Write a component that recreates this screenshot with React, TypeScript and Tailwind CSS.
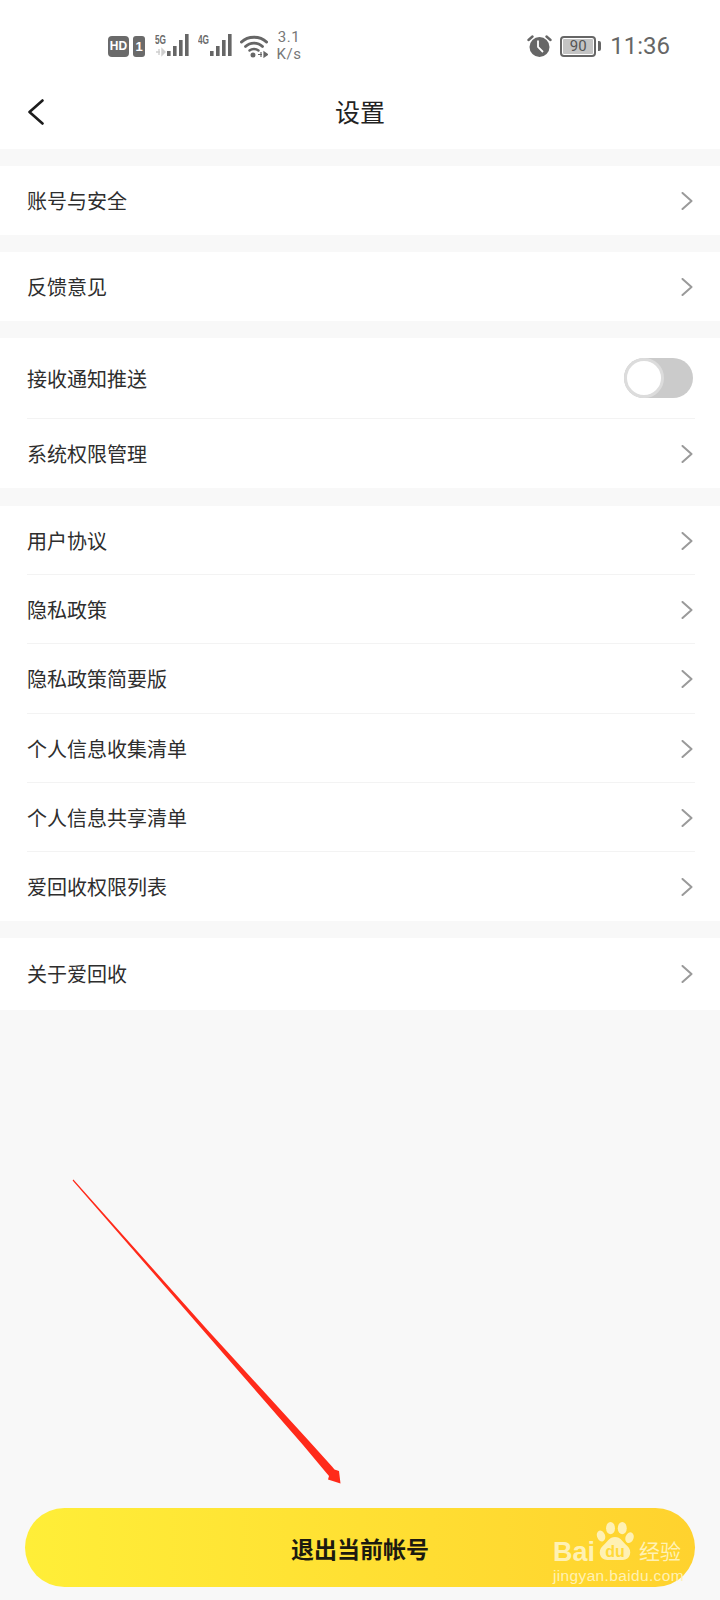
import React from "react";

const Chevron = () => (
  <svg width="12" height="18" viewBox="0 0 12 18" fill="none" className="shrink-0">
    <path d="M1.5 1 L10.5 9 L1.5 17" stroke="#9a9a9a" strokeWidth="2" strokeLinecap="round" strokeLinejoin="round" />
  </svg>
);

const Row = ({ label, className, divider }: { label: string; className: string; divider?: boolean }) => (
  <div className={`relative flex items-center justify-between bg-white pl-[27px] pr-[27px] ${className}`}>
    <span className="text-[20px] leading-[28px] text-[#2e2e2e]">{label}</span>
    <Chevron />
    {divider && <div className="absolute bottom-0 left-[27px] right-[25px] h-px bg-[#f3f3f3]" />}
  </div>
);

const Bars = ({ light }: { light?: boolean }) => (
  <svg width="37" height="24" viewBox="0 0 37 24" className="shrink-0">
    <text x="0" y="10" fontSize="12" fontWeight="700" fill="#6a6a6a" textLength="11" lengthAdjust="spacingAndGlyphs" fontFamily="'Liberation Sans', sans-serif">{light ? "5G" : "4G"}</text>
    {light && <path d="M1 18 H5 M4 15 V21 M7 15 V21 L10 18 Z" stroke="#cfcfcf" strokeWidth="1.4" fill="#cfcfcf" />}
    <rect x="12" y="17" width="3.6" height="5" fill="#666" />
    <rect x="18" y="12" width="3.6" height="10" fill="#666" />
    <rect x="24" y="6" width="3.6" height="16" fill="#666" />
    <rect x="30" y="0" width="3.6" height="22" fill="#666" />
  </svg>
);

const Wifi = () => (
  <svg width="28" height="24" viewBox="0 0 28 24" fill="none" className="shrink-0">
    <path d="M1.5 8 C8 1.5 20 1.5 26.5 8" stroke="#666" strokeWidth="3" strokeLinecap="round" />
    <path d="M5.5 12.5 C10 8 18 8 22.5 12.5" stroke="#666" strokeWidth="2.8" strokeLinecap="round" />
    <path d="M9.5 16.5 C12 14.5 16 14.5 18.5 16.5" stroke="#666" strokeWidth="2.4" strokeLinecap="round" />
    <circle cx="13" cy="21" r="2.5" fill="#666" />
    <path d="M18 20.5 H22 M21 18 V23 M24 18 V23 L27.5 20.5 Z" stroke="#666" strokeWidth="1.2" fill="#666" />
  </svg>
);

const Alarm = () => (
  <svg width="25" height="24" viewBox="0 0 25 24" fill="none" className="shrink-0">
    <circle cx="12.5" cy="13" r="10" fill="#666" />
    <path d="M1.5 6 L5.5 2.5 M23.5 6 L19.5 2.5" stroke="#666" strokeWidth="2.4" strokeLinecap="round" />
    <path d="M11 6.5 V13 L16 18" stroke="#fff" strokeWidth="1.8" />
  </svg>
);

const Paw = () => (
  <svg width="38" height="38" viewBox="0 0 34 34" className="absolute left-[43px] top-0">
    <g fill="#fff1b4">
      <ellipse cx="4.5" cy="12.5" rx="3.6" ry="5" transform="rotate(-20 4.5 12.5)" />
      <ellipse cx="13" cy="5.5" rx="4" ry="5.5" />
      <ellipse cx="23.5" cy="5.5" rx="4" ry="5.5" />
      <ellipse cx="30" cy="14" rx="3.6" ry="5" transform="rotate(20 30 14)" />
      <path d="M17 13.5 C22 13.5 24 18 28 21.5 C33 26 30.5 34 24 34 L10 34 C3.5 34 1 26 6 21.5 C10 18 12 13.5 17 13.5 Z" />
    </g>
  </svg>
);

export default function App() {
  return (
    <div
      className="relative flex h-[1600px] w-[720px] flex-col overflow-hidden bg-[#f8f8f8]"
      style={{ fontFamily: "'Noto Sans CJK SC', 'Noto Sans', sans-serif" }}
    >
      <header className="bg-white">
        <div className="flex h-[92px] items-center pl-[108px] pr-[50px] text-[#666]">
          <div className="flex h-[21px] w-[21px] items-center justify-center rounded-[4px] bg-[#6a6a6a] text-[12px] font-bold leading-none text-white" style={{ fontFamily: "'Liberation Sans', sans-serif" }}>
            HD
          </div>
          <div className="ml-[4px] flex h-[21px] w-[12px] items-center justify-center rounded-[3px] bg-[#6a6a6a] text-[13px] font-bold leading-none text-white" style={{ fontFamily: "'Liberation Sans', sans-serif" }}>
            1
          </div>
          <div className="ml-[10px]"><Bars light /></div>
          <div className="ml-[6px]"><Bars /></div>
          <div className="ml-[5px]"><Wifi /></div>
          <div className="ml-[6px] w-[30px] text-[15px] leading-[17px] tracking-[0.5px] text-[#777]" style={{ fontFamily: "'Roboto', sans-serif" }}>
            <div className="text-center">3.1</div>
            <div className="text-center">K/s</div>
          </div>
          <div className="ml-auto"><Alarm /></div>
          <div className="ml-[8px] flex h-[21px] w-[36px] items-center justify-center rounded-[4px] border-2 border-[#666] p-[1px]">
            <div className="flex h-full w-full items-center justify-center rounded-[1px] bg-[#c4c4c4] text-[15px] leading-none text-[#555]" style={{ fontFamily: "'Roboto', sans-serif" }}>
              90
            </div>
          </div>
          <div className="ml-[2px] h-[10px] w-[3px] rounded-r-[2px] bg-[#666]" />
          <span className="ml-[9px] text-[24px] leading-none text-[#666]" style={{ fontFamily: "'Roboto', sans-serif" }}>11:36</span>
        </div>
        <div className="relative mb-[14px] flex h-[43px] items-center justify-center">
          <svg width="18" height="26" viewBox="0 0 18 26" fill="none" className="absolute left-[27px] top-[7px]">
            <path d="M15.5 1.5 L2.5 13 L15.5 24.5" stroke="#1c1c1c" strokeWidth="2.6" strokeLinecap="round" strokeLinejoin="round" />
          </svg>
          <h1 className="-mt-[5px] text-[25px] font-normal leading-[34px] text-[#222]">设置</h1>
        </div>
      </header>

      <div className="mt-[17px]"><Row label="账号与安全" className="h-[69px]" /></div>
      <div className="mt-[17px]"><Row label="反馈意见" className="h-[69px]" /></div>

      <div className="mt-[17px]">
        <div className="relative flex h-[81px] items-center justify-between bg-white pl-[27px] pr-[27px]">
          <span className="text-[20px] leading-[28px] text-[#2e2e2e]">接收通知推送</span>
          <div className="-mt-[2px] flex h-[40px] w-[69px] items-center rounded-full bg-[#cbcbcb]">
            <div className="h-[40px] w-[40px] rounded-full border-[3px] border-[#dcdcdc] bg-white" />
          </div>
          <div className="absolute bottom-0 left-[27px] right-[25px] h-px bg-[#f3f3f3]" />
        </div>
        <Row label="系统权限管理" className="h-[69px]" />
      </div>

      <div className="mt-[18px]">
        <Row label="用户协议" className="h-[69px]" divider />
        <Row label="隐私政策" className="h-[69px]" divider />
        <Row label="隐私政策简要版" className="h-[70px]" divider />
        <Row label="个人信息收集清单" className="h-[69px]" divider />
        <Row label="个人信息共享清单" className="h-[69px]" divider />
        <Row label="爱回收权限列表" className="h-[69px]" />
      </div>

      <div className="mt-[17px]"><Row label="关于爱回收" className="h-[72px]" /></div>

      <div className="relative mx-[25px] mb-[13px] mt-auto flex h-[79px] items-center justify-center rounded-full bg-gradient-to-r from-[#ffee38] to-[#ffd22e]">
        <span className="text-[23px] font-bold leading-[32px] text-[#1c1a10]">退出当前帐号</span>
        <div className="absolute left-[528px] top-[14px] h-[62px] w-[135px]">
          <Paw />
          <div className="absolute left-0 top-[15px] text-[27px] font-bold leading-[30px] text-[#fff1b4]" style={{ fontFamily: "'Liberation Sans', sans-serif" }}>Bai</div>
          <div className="absolute left-[43px] top-[23px] w-[38px] text-center text-[16px] font-bold leading-[14px] text-[#ffd93a]" style={{ fontFamily: "'Liberation Sans', sans-serif" }}>du</div>
          <div className="absolute left-[86px] top-[13px] whitespace-nowrap text-[21px] leading-[30px] text-[#fff1b4]">经验</div>
          <div className="absolute left-0 top-[45px] whitespace-nowrap text-[15.5px] leading-[18px] tracking-[0.35px] text-[#fff1b4]" style={{ fontFamily: "'Liberation Sans', sans-serif" }}>jingyan.baidu.com</div>
        </div>
      </div>

      <svg width="720" height="1600" viewBox="0 0 720 1600" className="pointer-events-none absolute left-0 top-0">
        <polygon points="72.6,1180.4 73.4,1179.6 208,1330.5 309,1441 332,1466.5 334.5,1469.5 339,1471 340.5,1483.5 328,1479.5 329,1476 326,1472.5 303,1445 205,1332.5" fill="#ff2a1a" />
      </svg>
    </div>
  );
}
